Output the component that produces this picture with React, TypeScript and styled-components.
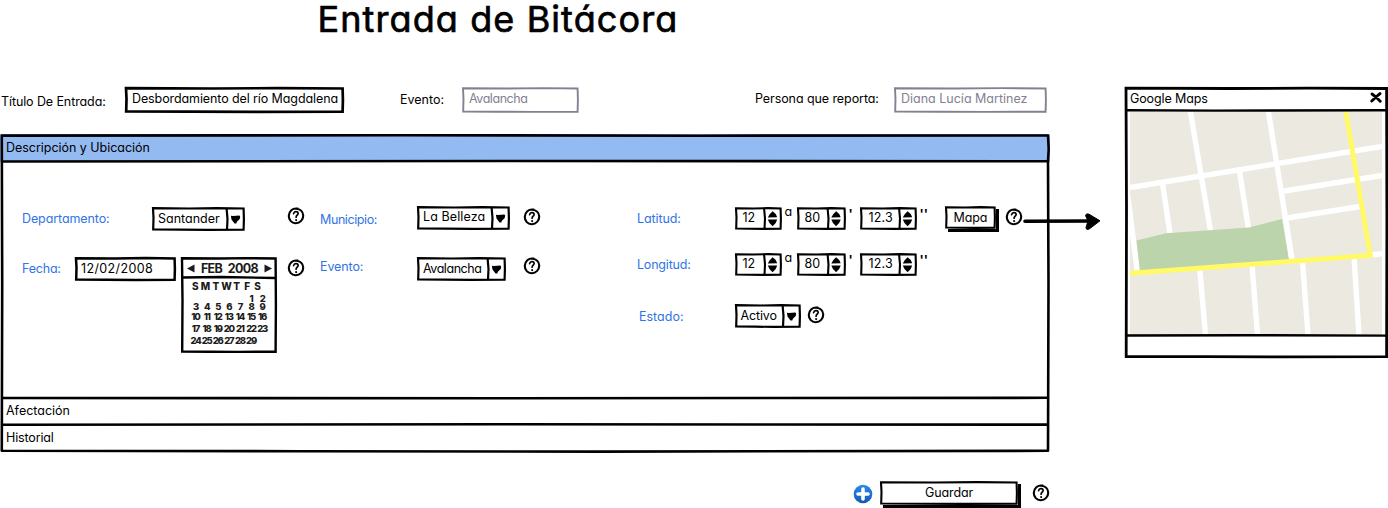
import React from "react";
import styled, { createGlobalStyle } from "styled-components";

const INK = "#000";
const MUTED = "#84808f";
const LINK = "#2f74e8";

const GlobalStyle = createGlobalStyle`
  * { box-sizing: border-box; }
  body {
    margin: 0;
    background: #fff;
    font-family: Inter, "Noto Sans", sans-serif;
    font-feature-settings: "cv11" 1;
    font-size: 12.5px;
    line-height: 18px;
    color: ${INK};
  }
`;

const Page = styled.div`
  position: relative;
  display: flex;
  width: 1388px;
  height: 508px;
  overflow: hidden;
`;

const Main = styled.main`
  width: 1050px;
  flex: none;
`;

const Title = styled.h1`
  margin: 0;
  height: 87px;
  padding: 0 0 0 317.5px;
  font-size: 36px;
  line-height: 38px;
  font-weight: 400;
  letter-spacing: 1.1px;
  -webkit-text-stroke: 0.7px ${INK};
  white-space: nowrap;
`;

const Row = styled.div<{ $h: number; $t?: number }>`
  display: flex;
  align-items: flex-start;
  height: ${(p) => p.$h}px;
  margin-top: ${(p) => p.$t ?? 0}px;
`;

const Text = styled.span<{ $ls?: number; $l?: number; $t?: number; $c?: string }>`
  display: block;
  margin: ${(p) => p.$t ?? 0}px 0 0 ${(p) => p.$l ?? 0}px;
  letter-spacing: ${(p) => p.$ls ?? 0}px;
  color: ${(p) => p.$c ?? INK};
  white-space: nowrap;
`;

const Label = styled(Text)<{ $w: number }>`
  width: ${(p) => p.$w}px;
  flex: none;
`;

const Box = styled.div<{ $w: number; $h: number; $l?: number; $t?: number }>`
  position: relative;
  display: flex;
  flex: none;
  width: ${(p) => p.$w}px;
  height: ${(p) => p.$h}px;
  margin: ${(p) => p.$t ?? 0}px 0 0 ${(p) => p.$l ?? 0}px;
`;

const Overlay = styled.svg`
  position: absolute;
  left: 0;
  top: 0;
  overflow: visible;
  pointer-events: none;
`;

type OutlineProps = { w: number; h: number; color?: string; stroke?: number; divider?: number };

/** Hand-drawn rectangle laid over the edges of a box. */
function Outline({ w, h, color = INK, stroke = 2.2, divider }: OutlineProps) {
  const r = w - 1.4;
  const b = h - 1.3;
  return (
    <Overlay width={w} height={h} fill="none" stroke={color} strokeWidth={stroke} strokeLinejoin="miter">
      <path
        d={`M1 1.2 L${w * 0.4} 1.5 L${w * 0.7} 1.1 L${r} 1.5 L${r + 0.3} ${h * 0.5} L${r} ${b} L${w * 0.6} ${b + 0.2} L${w * 0.3} ${b} L1.2 ${b - 0.2} L1.5 ${h * 0.45} Z`}
      />
      {divider !== undefined && <path d={`M${divider - 0.4} 1.5 L${divider + 0.5} ${h * 0.5} L${divider} ${b}`} />}
    </Overlay>
  );
}

type InputProps = { w: number; h?: number; l?: number; t?: number; ls?: number; muted?: boolean; pad?: number; top?: number; stroke?: number; value: string };

function Input({ w, h = 26, l, t, ls, muted, pad = 7, top = 3, stroke, value }: InputProps) {
  return (
    <Box $w={w} $h={h} $l={l} $t={t}>
      <Outline w={w} h={h} color={muted ? MUTED : INK} stroke={stroke ?? (muted ? 1.9 : 2.5)} />
      <Text $l={pad} $t={top} $ls={ls} $c={muted ? MUTED : INK}>{value}</Text>
    </Box>
  );
}

function Select({ w, h = 24, l, t, ls, divider, top = 3, value }: { w: number; h?: number; l?: number; t?: number; ls?: number; divider: number; top?: number; value: string }) {
  const c = (divider + w - 1) / 2;
  return (
    <Box $w={w} $h={h} $l={l} $t={t}>
      <Outline w={w} h={h} divider={divider} />
      <Overlay width={w} height={h}>
        <path d={`M${c - 4.6} 8.7 L${c - 2.6} 8.9 L${c + 3.8} 8.4 L${c + 4.7} 9.6 L${c + 4.2} 12 L${c + 1.4} 14.8 L${c + 0.8} 16.6 L${c - 1} 16.4 L${c - 4} 12.6Z`} />
      </Overlay>
      <Text $l={6} $t={top} $ls={ls}>{value}</Text>
    </Box>
  );
}

function Spinner({ w, divider, pad, ls, value }: { w: number; divider: number; pad: number; ls?: number; value: string }) {
  const c = divider + 8.1;
  return (
    <Box $w={w} $h={23}>
      <Outline w={w} h={23} divider={divider} stroke={2.1} />
      <Overlay width={w} height={23}>
        <path d={`M${c} 4.3 Q${c + 3.2} 6.2 ${c + 4.6} 10.2 L${c - 4.8} 10.6 Q${c - 4} 7.6 ${c} 4.3Z`} />
        <path d={`M${c - 4.8} 12.6 L${c + 4.6} 12.4 Q${c + 4} 15.6 ${c} 19.3 Q${c - 3.4} 17 ${c - 4.8} 12.6Z`} />
      </Overlay>
      <Text $l={pad} $t={2} $ls={ls}>{value}</Text>
    </Box>
  );
}

const HelpIcon = styled.svg<{ $l?: number; $t?: number }>`
  flex: none;
  display: block;
  width: 18px;
  height: 18px;
  margin: ${(p) => p.$t ?? 0}px 0 0 ${(p) => p.$l ?? 0}px;
`;

function Help({ l, t }: { l?: number; t?: number }) {
  return (
    <HelpIcon $l={l} $t={t} viewBox="0 0 18 18" fill="none" stroke={INK} strokeLinecap="round" strokeLinejoin="round">
      <path strokeWidth="2.1" d="M10.6 1.6 C5.4 .7 2 4.4 1.8 8.8 C1.7 13 4.8 16.4 8.8 16.2 C13 16 16.4 12.8 16.2 8.4 C16 4.6 13.2 2 9.4 1.7" />
      <path strokeWidth="1.7" d="M6.6 6.6 C7 4.8 8.2 4.4 9.4 4.6 C11.2 4.8 11.6 6.6 10.6 7.7 C9.8 8.5 9.1 8.8 9.1 10.2" />
      <path strokeWidth="2" d="M9.1 13 L9.2 13.1" />
    </HelpIcon>
  );
}

const Mark = styled.span<{ $w: number; $t: number; $bold?: boolean }>`
  width: ${(p) => p.$w}px;
  flex: none;
  margin-top: ${(p) => p.$t}px;
  padding-left: 3px;
  font-weight: ${(p) => (p.$bold ? 700 : 400)};
`;

function Coordinates() {
  return (
    <>
      <Spinner w={47} divider={29.5} pad={8} value="12" />
      <Mark $w={15} $t={-4}>a</Mark>
      <Spinner w={49} divider={31} pad={8} value="80" />
      <Mark $w={14} $t={-1} $bold>'</Mark>
      <Spinner w={57} divider={39.5} pad={9} ls={0.2} value="12.3" />
      <Mark $w={30} $t={-1} $bold>''</Mark>
    </>
  );
}

const ButtonBox = styled.button<{ $w: number; $h: number; $l?: number; $t?: number }>`
  position: relative;
  flex: none;
  width: ${(p) => p.$w}px;
  height: ${(p) => p.$h}px;
  margin: ${(p) => p.$t ?? 0}px 0 0 ${(p) => p.$l ?? 0}px;
  padding: 0;
  border: 0;
  background: #fff;
  box-shadow: 3px 3px 0 ${INK};
  font: inherit;
  color: ${INK};
`;

const ButtonText = styled(Text)`
  text-align: center;
`;

function Button({ w, h, l, t, ls, children }: { w: number; h: number; l?: number; t?: number; ls?: number; children: string }) {
  return (
    <ButtonBox $w={w} $h={h} $l={l} $t={t}>
      <Outline w={w} h={h} stroke={2.1} />
      <ButtonText $ls={ls}>{children}</ButtonText>
    </ButtonBox>
  );
}

const Accordion = styled.section`
  position: relative;
  width: 1050px;
  height: 319px;
`;

const Section = styled.div<{ $h: number; $active?: boolean }>`
  height: ${(p) => p.$h}px;
  padding: ${(p) => (p.$active ? 5 : 4)}px 0 0 6px;
  background: ${(p) => (p.$active ? "#94baf2" : "#fff")};
`;

const Panel = styled.div`
  display: grid;
  grid-template-columns: 320px 317px 413px;
  height: 236px;
  padding-top: 44px;
`;

const Calendar = styled.div`
  position: relative;
  flex: none;
  width: 96px;
  height: 96px;
  margin-left: 5px;
  color: #1c1c20;
  font-weight: 700;
`;

const Month = styled.div`
  display: flex;
  align-items: center;
  justify-content: space-between;
  height: 21px;
  padding: 2px 5px 0 6px;
  font-size: 12.5px;
  letter-spacing: -0.6px;
  word-spacing: 3px;
`;

const Week = styled.div<{ $t: number; $head?: boolean }>`
  display: grid;
  grid-template-columns: repeat(7, ${(p) => (p.$head ? 10.4 : 11.1)}px);
  margin: ${(p) => p.$t}px 0 0 9px;
  height: 9px;
  font-size: ${(p) => (p.$head ? 10 : 9.5)}px;
  line-height: 9px;
  font-weight: 800;
  letter-spacing: ${(p) => (p.$head ? 0 : -1.2)}px;
  text-align: center;
  white-space: nowrap;
`;

const weeks: [number, string[]][] = [
  [3, ["", "", "", "", "", "1", "2"]],
  [-0.5, ["3", "4", "5", "6", "7", "8", "9"]],
  [0.5, ["10", "11", "12", "13", "14", "15", "16"]],
  [3, ["17", "18", "19", "20", "21", "22", "23"]],
  [3.5, ["24", "25", "26", "27", "28", "29", ""]],
];

function DatePicker() {
  return (
    <Calendar>
      <Outline w={96} h={96} stroke={2.4} />
      <Overlay width={96} height={96} fill="none" stroke={INK} strokeWidth="2.3">
        <path d="M1 20.5 L40 20 L94 21" />
      </Overlay>
      <Month>
        <svg width="8" height="9"><path d="M7.5 .5 L7.5 8.5 L0 4.6Z" fill="#1c1c20" /></svg>
        <span>FEB 2008</span>
        <svg width="8" height="9"><path d="M.5 .5 L.5 8.5 L8 4.4Z" fill="#1c1c20" /></svg>
      </Month>
      <Week $t={3.5} $head>
        {["S", "M", "T", "W", "T", "F", "S"].map((d, i) => <span key={i}>{d}</span>)}
      </Week>
      {weeks.map(([t, days], i) => (
        <Week key={i} $t={t}>
          {days.map((d, j) => <span key={j}>{d}</span>)}
        </Week>
      ))}
    </Calendar>
  );
}

const Footer = styled.div`
  display: flex;
  align-items: flex-start;
  height: 55px;
  padding: 29px 0 0 853px;
`;

const PlusIcon = styled.svg`
  flex: none;
  margin-top: 2px;
`;

const MapWindow = styled.aside`
  position: relative;
  flex: none;
  width: 263px;
  height: 271px;
  margin: 87px 0 0 75px;
`;

const WindowBar = styled.header`
  display: flex;
  justify-content: space-between;
  height: 24px;
  padding: 3px 6px 0 5px;
`;

const CloseIcon = styled.svg`
  margin-top: 2px;
`;

const MapArt = styled.svg`
  display: block;
  margin-left: 5px;
`;

function StreetMap() {
  return (
    <MapArt width="252" height="224" viewBox="0 0 252 224">
      <rect width="252" height="223" y="1" fill="#ece9e1" />
      <g stroke="#fff" strokeWidth="5.400" fill="none">
        <path d="M0 76.500 L252 35.500" />
        <path d="M60.300 0 L80.500 120" />
        <path d="M138.300 0 L162 148" />
        <path d="M154 80 L252 64.500" />
        <path d="M157 107 L230 95.500" />
        <path d="M32.500 72 L40 123" />
        <path d="M109.500 60 L118.500 118" />
        <path d="M-2 86 L7.200 160" />
        <path d="M240 144 L252 142.800" />
        <path d="M69.500 155 L75.500 224" />
        <path d="M122 154 L127.500 224" />
        <path d="M172.500 150 L178 224" />
        <path d="M224 146 L229 224" />
      </g>
      <path d="M6.500 129.500 L36 122.300 L119 116.500 L152 108 L159 149 L10 160Z" fill="#bbd4ab" />
      <path d="M154.600 104 L161.500 149" stroke="#fff" strokeWidth="4.500" />
      <g stroke="#fffa65" strokeWidth="5" fill="none">
        <path d="M0 162.300 L242.500 144.300" />
        <path d="M215.700 0 L240.500 146.500" />
      </g>
      <path fill="#fff" d="M0 0h252v1h-252z" />
    </MapArt>
  );
}

const Arrow = styled.svg`
  position: absolute;
  left: 1020px;
  top: 210px;
`;

export default function App() {
  return (
    <Page>
      <GlobalStyle />
      <Main>
        <Title>Entrada de Bitácora</Title>
        <Row $h={47}>
          <Label $w={124} $l={1} $t={6} $ls={-0.1}>Título De Entrada:</Label>
          <Input w={219} ls={-0.1} stroke={2.7} value="Desbordamiento del río Magdalena" />
          <Label $w={62} $l={56} $t={4}>Evento:</Label>
          <Input w={117} ls={-0.45} muted value="Avalancha" />
          <Label $w={139} $l={176} $t={3} $ls={-0.08}>Persona que reporta:</Label>
          <Input w={153} muted value="Diana Lucía Martinez" />
        </Row>
        <Accordion>
          <Section $h={28} $active><Text $ls={-0.03}>Descripción y Ubicación</Text></Section>
          <Panel>
            <div>
              <Row $h={51}>
                <Label $w={130} $l={22} $t={4} $ls={-0.1} $c={LINK}>Departamento:</Label>
                <Select w={93} t={1} divider={75} value="Santander" />
                <Help l={42} t={1} />
              </Row>
              <Row $h={100}>
                <Label $w={53} $l={22} $t={3} $ls={-0.2} $c={LINK}>Fecha:</Label>
                <Input w={101} h={24} pad={6} value="12/02/2008" ls={0.38} />
                <DatePicker />
                <Help l={10} t={2} />
              </Row>
            </div>
            <div>
              <Row $h={51}>
                <Label $w={97} $t={5} $ls={-0.4} $c={LINK}>Municipio:</Label>
                <Select w={93} divider={75} top={2} ls={0.1} value="La Belleza" />
                <Help l={13} t={2} />
              </Row>
              <Row $h={60}>
                <Label $w={97} $t={1} $ls={-0.1} $c={LINK}>Evento:</Label>
                <Select w={89} divider={71} ls={-0.45} value="Avalancha" />
                <Help l={17} />
              </Row>
            </div>
            <div>
              <Row $h={46}>
                <Label $w={97.500} $t={4} $ls={-0.1} $c={LINK}>Latitud:</Label>
                <Row $h={23} $t={1}><Coordinates /></Row>
                <Button w={51} h={23} l={-1.500} ls={-0.1}>Mapa</Button>
                <Help l={8.500} t={2} />
              </Row>
              <Row $h={52}>
                <Label $w={97.500} $t={4} $ls={-0.2} $c={LINK}>Longitud:</Label>
                <Row $h={23} $t={1}><Coordinates /></Row>
              </Row>
              <Row $h={30}>
                <Label $w={95.500} $l={2} $t={4} $c={LINK}>Estado:</Label>
                <Select w={66} divider={48} ls={-0.15} value="Activo" />
                <Help l={6.500} t={2} />
              </Row>
            </div>
          </Panel>
          <Section $h={27}><Text>Afectación</Text></Section>
          <Section $h={28}><Text $ls={-0.15}>Historial</Text></Section>
          <Overlay width="1050" height="319" fill="none" stroke={INK} strokeWidth="2.6" strokeLinejoin="round">
            <path d="M1.800 1.600 L400 1.200 L700 1.700 L1048 1.500 L1048.700 15 L1048 27 L1048.500 150 L1048 316.800 L600 317.600 L300 317.200 L1.800 316.800 L2.200 150Z" />
            <path d="M1.800 27.500 L500 27 L1048 27.300" />
            <path d="M1.800 264 L500 264.300 L1048 263.800" />
            <path d="M1.800 290.800 L500 290.300 L1048 290.600" />
          </Overlay>
        </Accordion>
        <Footer>
          <PlusIcon width="20" height="20" viewBox="0 0 20 20">
            <defs>
              <linearGradient id="plus" x1="0" y1="0" x2="0" y2="1">
                <stop offset="0" stopColor="#2a8cec" />
                <stop offset="1" stopColor="#1457b8" />
              </linearGradient>
            </defs>
            <circle cx="10" cy="10" r="9.300" fill="url(#plus)" />
            <path d="M10 5 V15 M5 10 H15" stroke="#fff" strokeWidth="3.600" strokeLinecap="round" />
          </PlusIcon>
          <Button w={138} h={24} l={7} t={-1} ls={-0.1}>Guardar</Button>
          <Help l={14} t={2} />
        </Footer>
      </Main>
      <MapWindow>
        <WindowBar>
          <Text $ls={-0.12}>Google Maps</Text>
          <CloseIcon width="12" height="11" viewBox="0 0 12 11">
            <path d="M2 2 L6 5 L10.200 9.200 M10 1.600 L6 5 L1.800 9" fill="none" stroke={INK} strokeWidth="2.900" strokeLinecap="round" />
          </CloseIcon>
        </WindowBar>
        <StreetMap />
        <Outline w={263} h={271} stroke={2.800} />
        <Overlay width="263" height="271" fill="none" stroke={INK} strokeWidth="2.400">
          <path d="M1 23.200 L90 23.600 L262 23.200" />
          <path d="M1 248.500 L120 248.200 L262 248.600" />
        </Overlay>
      </MapWindow>
      <Arrow width="84" height="24" viewBox="0 0 84 24">
        <path d="M5 11.200 L72 11" stroke={INK} strokeWidth="3.600" strokeLinecap="round" />
        <path d="M65.500 5.500 Q66 3 69 4.200 L80 10.800 L69.500 18.800 Q66 20.500 66 17.500 L68 11Z" fill={INK} stroke={INK} strokeLinejoin="round" />
      </Arrow>
    </Page>
  );
}
